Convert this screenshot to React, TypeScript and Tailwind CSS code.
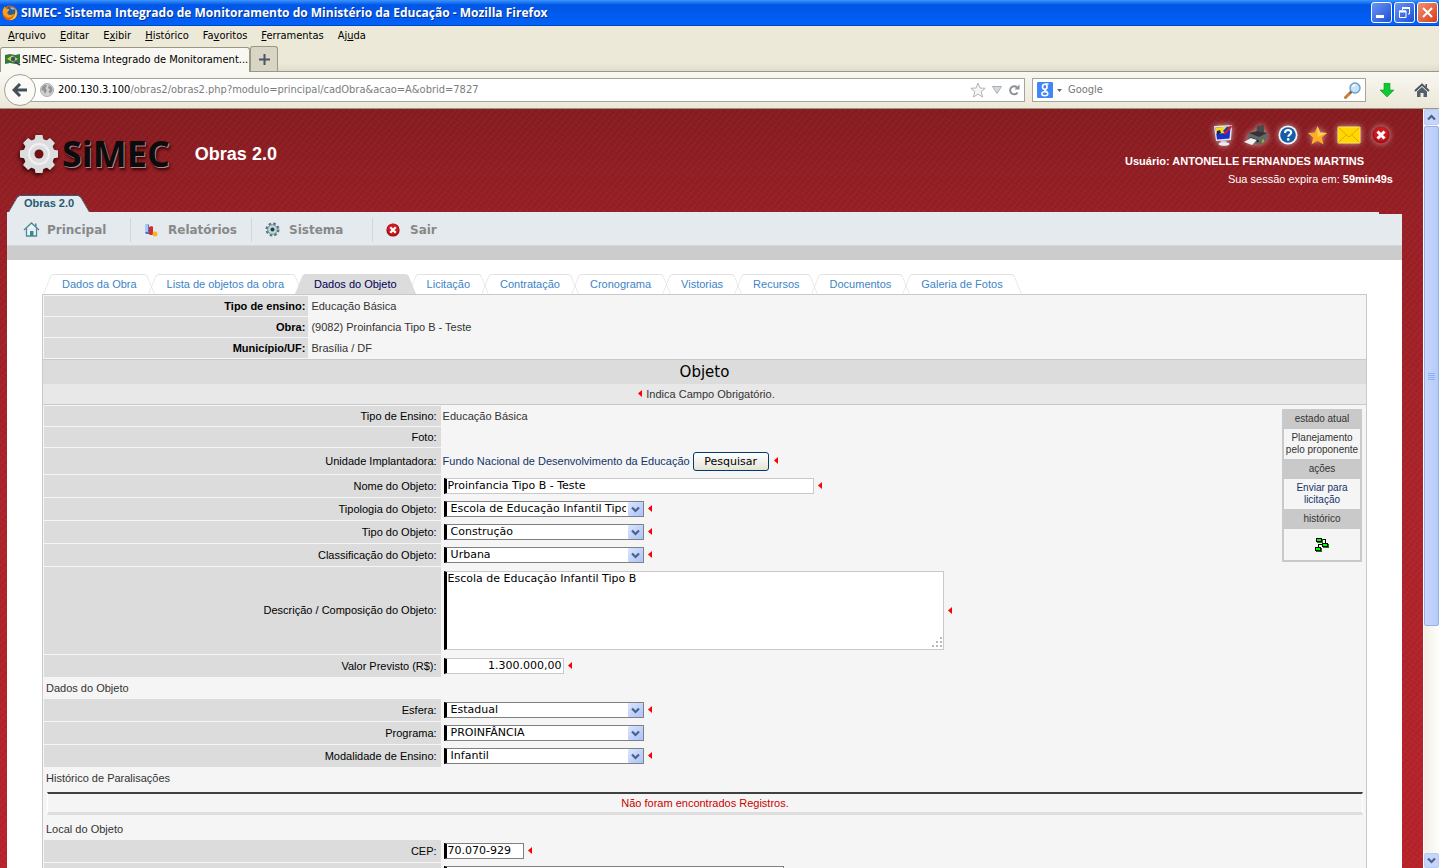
import type { ReactNode } from 'react';

const menuBar = [
  ['', 'A', 'rquivo'],
  ['', 'E', 'ditar'],
  ['E', 'x', 'ibir'],
  ['', 'H', 'istórico'],
  ['Fa', 'v', 'oritos'],
  ['', 'F', 'erramentas'],
  ['Aj', 'u', 'da'],
];

const objectTabs = [
  'Dados da Obra',
  'Lista de objetos da obra',
  'Dados do Objeto',
  'Licitação',
  'Contratação',
  'Cronograma',
  'Vistorias',
  'Recursos',
  'Documentos',
  'Galeria de Fotos',
];

const workInfo = [
  ['Tipo de ensino:', 'Educação Básica'],
  ['Obra:', '(9082) Proinfancia Tipo B - Teste'],
  ['Município/UF:', 'Brasília / DF'],
];

/* ---------- Icons ---------- */

function Gear({ size, fill, hole }: { size: number; fill: string; hole: string }) {
  return (
    <svg width={size} height={size} viewBox="0 0 40 40" aria-hidden="true">
      <g fill={fill}>
        {[0, 45, 90, 135].map((angle) => (
          <path key={angle} d="M16.500 1h7l1 5v28l-1 5h-7l-1-5V6z" transform={`rotate(${angle} 20 20)`} />
        ))}
        <circle cx="20" cy="20" r="15.500" />
      </g>
      <circle cx="20" cy="20" r="10" fill="none" stroke="#fff" strokeOpacity=".6" strokeWidth="2" />
      <circle cx="20" cy="20" r="4.500" fill={hole} />
    </svg>
  );
}

function FirefoxIcon() {
  return (
    <svg width="16" height="16" viewBox="0 0 16 16" aria-hidden="true">
      <circle cx="8" cy="8" r="7.500" fill="#e66000" />
      <circle cx="8.500" cy="6.500" r="5" fill="#2c5d9e" />
      <path d="M8 2.500c2-.8 4 0 5 1.500-1 .3-2 1-3 .5S8.500 3.500 8 2.500z" fill="#7fc1ec" />
      <path d="M.6 6C1 4 2 2.500 3 1.500c0 1 .5 1.800 1.500 2.200 1.500-.2 2.500.3 3 1L6 6.500c-.8.700-1 2 0 2.800 1.500 1.200 4 .8 6.500-.8-.8 3-4 4.800-7 4C2.500 11.500.6 9 .6 6z" fill="#f9a01b" />
      <path d="M13.500 3.500c2 2.500 2 7-.5 9.500-1.500 1.500-4 2.300-6 2 4-1 7-5 6.500-11.500z" fill="#ffcf3d" />
    </svg>
  );
}

function SiteIcon() {
  return (
    <svg width="16" height="14" viewBox="0 0 16 14" aria-hidden="true">
      <path d="M0 2l5-1 5 1 5-1v9l-5 1-5-1-5 1z" fill="#2f7a41" />
      <path d="M2 6l5-3.500L13 6 8 9z" fill="#e8cf3a" />
      <circle cx="8" cy="6" r="2.200" fill="#2d4f9b" />
      <path d="M10 9l5 3" stroke="#446" strokeWidth="2" />
    </svg>
  );
}

function GlobeIcon() {
  return (
    <svg width="14" height="14" viewBox="0 0 14 14" aria-hidden="true">
      <circle cx="7" cy="7" r="6.500" fill="#d2d2d2" stroke="#adadad" />
      <path d="M2 4l3-2.500 2 1L5.500 5 7 7.500 5 11 3.500 8 1.500 7zM9 2l3 2.500.5 3L10 11 8.500 8.500 10 6.500 8 5z" fill="#959595" />
    </svg>
  );
}

function ReloadIcon() {
  return (
    <svg width="12" height="12" viewBox="0 0 12 12" aria-hidden="true">
      <path d="M9 3.500A4 4 0 1 0 9.500 8.500" fill="none" stroke="#8a9199" strokeWidth="2" />
      <path d="M11.500.5v5h-5z" fill="#8a9199" />
    </svg>
  );
}

function MagnifierIcon() {
  return (
    <svg width="17" height="17" viewBox="0 0 17 17" aria-hidden="true">
      <path d="M7 10L1.500 15.500" stroke="#c77d35" strokeWidth="3" strokeLinecap="round" />
      <path d="M8 9l-2 2" stroke="#555" strokeWidth="2" />
      <circle cx="11" cy="6" r="5" fill="#c6e5fa" stroke="#6f9cc6" strokeWidth="1.400" />
      <path d="M8.500 5c.5-1.500 2-2 3-1.800" stroke="#fff" strokeWidth="1.500" fill="none" />
    </svg>
  );
}

function HomeIcon() {
  return (
    <svg width="16" height="15" viewBox="0 0 16 15" aria-hidden="true">
      <path d="M1 8l7-6.500L15 8" fill="none" stroke="#4b5563" strokeWidth="2" />
      <path d="M3 8.500l5-4.500 5 4.500V14H9.500v-4h-3v4H3z" fill="#55606d" />
      <path d="M11.500 1H13v4l-1.500-1.500z" fill="#4b5563" />
    </svg>
  );
}

function CloseBadge({ size }: { size: number }) {
  return (
    <svg width={size} height={size} viewBox="0 0 18 18" aria-hidden="true">
      <circle cx="9" cy="9" r="8.500" fill="#a80f14" />
      <circle cx="9" cy="8" r="7" fill="#cc1a1f" />
      <path d="M5.500 5.500l7 7M12.500 5.500l-7 7" stroke="#fff" strokeWidth="3" />
    </svg>
  );
}

function MonitorIcon() {
  return (
    <svg width="22" height="22" viewBox="0 0 22 22" aria-hidden="true">
      <path d="M2 2l18-1-1 15-15 1z" fill="#dfe6ee" />
      <path d="M3.500 3.500L18.500 2.500l-1 12-12.500 1z" fill="#1b2ec9" />
      <path d="M3.500 3.500L15 2.700 11 7l2 2-8.500 1z" fill="#f5dc19" />
      <path d="M5 7l3-1 1 3-4 2z" fill="#152072" />
      <path d="M19 1l-7 8 1 2 7-8z" fill="#d61e1e" />
      <path d="M9 17h5l1 3H8z" fill="#c8ced6" />
      <ellipse cx="12" cy="20" rx="5.500" ry="1.800" fill="#e8ebef" />
    </svg>
  );
}

function PrinterIcon() {
  return (
    <svg width="26" height="22" viewBox="0 0 26 22" aria-hidden="true">
      <path d="M14 2l7-1v9l-8 1z" fill="#4a4a4a" />
      <path d="M6 9l9-2 9 2 1 6-8 6-8-2-5-4z" fill="#666" />
      <path d="M6 9l9-2 9 2-8 4z" fill="#333" />
      <path d="M7 13l8 3 1 2-5-1z" fill="#151515" />
      <path d="M1 18l7-4 6 2-5 5z" fill="#f0f0f0" />
      <path d="M19 16l2-1v3l-2 1z" fill="#7dbb2e" />
    </svg>
  );
}

function HelpIcon() {
  return (
    <svg width="20" height="20" viewBox="0 0 20 20" aria-hidden="true">
      <circle cx="10" cy="10" r="9.500" fill="#f4f8fc" />
      <circle cx="10" cy="10" r="7.800" fill="#145ea8" />
      <path d="M7 8c0-4 6.200-3.800 6.200-.4 0 2.200-2.900 2-2.900 4.200" fill="none" stroke="#fff" strokeWidth="2.100" />
      <circle cx="10.200" cy="14.400" r="1.300" fill="#fff" />
    </svg>
  );
}

function StarIcon() {
  return (
    <svg width="21" height="21" viewBox="0 0 21 21" aria-hidden="true">
      <path d="M10.500 1l2.700 6.500 7 .5-5.400 4.500 1.800 7-6.100-3.800-6.100 3.800 1.800-7L.8 8l7-.5z" fill="#ffae22" />
      <path d="M10.500 1l2.700 6.500 7 .5-9.700 4z" fill="#ffd257" />
    </svg>
  );
}

function MailIcon() {
  return (
    <svg width="24" height="18" viewBox="0 0 24 18" aria-hidden="true">
      <path d="M1 1h22v16H1z" fill="#ffd800" stroke="#ffe45c" />
      <path d="M1.500 1.500L12 11 22.500 1.500M1.500 16.500L9 9M22.500 16.500L15 9" fill="none" stroke="#e6a400" />
    </svg>
  );
}

function HouseIcon() {
  return (
    <svg width="17" height="15" viewBox="0 0 17 15" aria-hidden="true">
      <path d="M1 8l7.500-7L16 8M3.500 6.500V14h10V6.500" fill="#eef5f7" stroke="#4c8a99" strokeWidth="1.300" />
      <path d="M7 9h3.500v5H7z" fill="#3e8494" />
      <path d="M12 1.500h1.500v4L12 4z" fill="#4c8a99" />
    </svg>
  );
}

function ChartIcon() {
  return (
    <svg width="14" height="14" viewBox="0 0 14 14" aria-hidden="true">
      <path d="M1 2l3-1 1 1v9H2L1 9z" fill="#3f74d8" />
      <path d="M1 2l3-1v8L1 9z" fill="#a9c6f5" />
      <path d="M5 4l3-1 1 1v8H6L5 11z" fill="#d42a2a" />
      <circle cx="11" cy="11" r="2.500" fill="#f4b81e" />
    </svg>
  );
}

function CogIcon() {
  return (
    <svg width="15" height="15" viewBox="0 0 15 15" aria-hidden="true">
      <circle cx="7.500" cy="7.500" r="5.800" fill="#dfe9ec" stroke="#54747e" strokeWidth="2.400" strokeDasharray="2.500 2.060" />
      <circle cx="7.500" cy="7.500" r="4.800" fill="#c3d5da" stroke="#6d8f98" />
      <circle cx="7.500" cy="7.500" r="2" fill="#243f4c" />
    </svg>
  );
}

function WorkflowIcon() {
  return (
    <svg width="15" height="14" viewBox="0 0 15 14" aria-hidden="true" shapeRendering="crispEdges">
      <path d="M7 1.500h3.500V6M7 6.500H3.500V10" fill="none" stroke="#000" />
      <path d="M2 1h6v4H2zM8 6h6v4H8zM1 10h6v4H1z" fill="#0a7a0a" />
      <path d="M1 0h6v4H1zM7 5h6v4H7zM0 9h6v4H0z" fill="#000" />
      <path d="M2 1h4v2H2zM8 6h4v2H8zM1 10h4v2H1z" fill="#0f0" />
    </svg>
  );
}

function Chevron({ up = false }: { up?: boolean }) {
  return (
    <svg width="9" height="7" viewBox="0 0 9 7" aria-hidden="true">
      <path d={up ? 'M1 5.500L4.500 2 8 5.500' : 'M1 1.500L4.500 5 8 1.500'} fill="none" stroke="#4d6185" strokeWidth="2.200" />
    </svg>
  );
}

function Required() {
  return (
    <svg className="mb-px ml-1 shrink-0" width="4" height="7" viewBox="0 0 4 7" aria-label="obrigatório">
      <path d="M4 0v7L0 3.500z" fill="#f00" />
    </svg>
  );
}

/* ---------- Browser window ---------- */

function TitleBar() {
  return (
    <header className="flex h-[26px] shrink-0 items-center border-b border-[#0146c4] bg-linear-to-b from-[#3b95ff] via-[#0055e5] via-20% to-[#0262f8] pr-px pl-[2px]">
      <FirefoxIcon />
      <h1 className="ml-[3px] flex-1 font-[Open_Sans,sans-serif] text-[12px] font-bold text-white [text-shadow:1px_1px_0_#0a2f8a]">
        SIMEC- Sistema Integrado de Monitoramento do Ministério da Educação - Mozilla Firefox
      </h1>
      <div className="flex gap-[2px]">
        <button aria-label="Minimizar" className="flex size-[21px] items-end rounded-[3px] border border-white bg-linear-to-br from-[#6a93f5] to-[#1b4fd6] p-1">
          <span className="h-[3px] w-2 bg-white" />
        </button>
        <button aria-label="Restaurar" className="flex size-[21px] items-center justify-center rounded-[3px] border border-white bg-linear-to-br from-[#6a93f5] to-[#1b4fd6]">
          <svg width="11" height="11" viewBox="0 0 11 11" aria-hidden="true">
            <path d="M3.500 3V1h7v6H9M.5 4h6.500v6.500H.5z" fill="none" stroke="#fff" />
            <path d="M3 1h8M0 4.500h7" stroke="#fff" strokeWidth="2" />
          </svg>
        </button>
        <button aria-label="Fechar" className="flex size-[21px] items-center justify-center rounded-[3px] border border-white bg-linear-to-br from-[#f0906f] to-[#d5380f]">
          <svg width="11" height="11" viewBox="0 0 11 11" aria-hidden="true">
            <path d="M1 1l9 9M10 1l-9 9" stroke="#fff" strokeWidth="2" />
          </svg>
        </button>
      </div>
    </header>
  );
}

function BrowserChrome() {
  return (
    <div className="shrink-0 font-[DejaVu_Sans_Condensed,Noto_Sans,sans-serif] text-[11px] text-black">
      <nav className="flex h-5 items-center gap-[14px] bg-[#ece9d8] pl-2">
        {menuBar.map(([before, key, after]) => (
          <button key={key + after}>
            {before}
            <u>{key}</u>
            {after}
          </button>
        ))}
      </nav>
      <div className="flex h-[26px] items-end border-b border-[#9a9784] bg-linear-to-b from-[#ece9d8] from-70% to-[#dedbca]">
        <div className="-mb-px flex h-[25px] w-[250px] items-center rounded-t-[3px] border border-b-0 border-[#9a9784] bg-[#f8f7f1] pl-1">
          <SiteIcon />
          <span className="ml-px whitespace-nowrap">SIMEC- Sistema Integrado de Monitorament...</span>
        </div>
        <button aria-label="Nova aba" className="flex h-[25px] w-7 items-center justify-center rounded-t-[3px] border border-b-0 border-[#9a9784] bg-[#d8d5c5]">
          <svg width="11" height="11" viewBox="0 0 11 11" aria-hidden="true">
            <path d="M5.500 0v11M0 5.500h11" stroke="#4a5563" strokeWidth="2" />
          </svg>
        </button>
      </div>
      <div className="flex h-[37px] items-center border-b border-[#9a9784] bg-linear-to-b from-[#f8f7f1] to-[#ebe8d8] pr-[9px] pl-1">
        <button aria-label="Voltar" className="z-10 flex size-8 shrink-0 items-center justify-center rounded-full border border-[#a3a193] bg-[#fbfaf6]">
          <svg width="16" height="14" viewBox="0 0 16 14" aria-hidden="true">
            <path d="M8 1L2 7l6 6M2.500 7H15" fill="none" stroke="#454f5b" strokeWidth="3" />
          </svg>
        </button>
        <div className="-ml-2 flex h-6 flex-1 items-center border border-[#a6a498] bg-white pr-1 pl-[11px]">
          <GlobeIcon />
          <p className="ml-1 flex-1 text-[#7c7c7c]">
            <span className="text-black">200.130.3.100</span>
            /obras2/obras2.php?modulo=principal/cadObra&amp;acao=A&amp;obrid=7827
          </p>
          <div className="flex items-center gap-[6px]">
            <svg width="16" height="16" viewBox="0 0 16 16" aria-hidden="true">
              <path d="M8 1l2 5 5.200.3-4 3.400 1.400 5.300L8 12.200 3.400 15l1.400-5.300-4-3.400L6 6z" fill="#f5f5f5" stroke="#b1b5ba" />
            </svg>
            <svg width="10" height="8" viewBox="0 0 10 8" aria-hidden="true">
              <path d="M.5.5h9L5 7.500z" fill="#d4dadd" stroke="#a9b0b6" />
            </svg>
            <ReloadIcon />
          </div>
        </div>
        <label className="ml-[7px] flex h-6 w-[334px] items-center border border-[#a6a498] bg-white px-1">
          <svg width="16" height="16" viewBox="0 0 16 16" aria-hidden="true">
            <rect width="16" height="16" rx="1" fill="#4285f4" />
            <ellipse cx="7.800" cy="4.800" rx="2.300" ry="2.600" fill="none" stroke="#fff" strokeWidth="1.600" />
            <path d="M8 2h3.500M8 7.500c-1 1 1.500 1.600 2.300 2.700" fill="none" stroke="#fff" strokeWidth="1.300" />
            <ellipse cx="7.800" cy="11.800" rx="3" ry="2" fill="none" stroke="#fff" strokeWidth="1.500" />
          </svg>
          <svg className="ml-1" width="5" height="3" viewBox="0 0 5 3" aria-hidden="true">
            <path d="M0 0h5L2.500 3z" fill="#666" />
          </svg>
          <input aria-label="Pesquisar na web" placeholder="Google" className="ml-[6px] min-w-0 flex-1 outline-none placeholder:text-[#777]" />
          <MagnifierIcon />
        </label>
        <div className="ml-[14px] flex items-center gap-[20px]">
          <svg width="14" height="14" viewBox="0 0 14 14" aria-hidden="true">
            <path d="M4 0h6v7h4l-7 7-7-7h4z" fill="#12c832" stroke="#0a9a24" strokeWidth=".6" />
          </svg>
          <HomeIcon />
        </div>
      </div>
    </div>
  );
}

function ScrollBar() {
  return (
    <div aria-hidden="true" className="flex w-4 shrink-0 flex-col border-l border-white bg-linear-to-r from-[#f1efe6] to-[#fefefb]">
      <div className="flex h-4 items-center justify-center rounded-[2px] border border-[#b7c9f5] bg-[#c6d5fb]">
        <Chevron up />
      </div>
      <div className="mt-px flex h-[500px] flex-col items-center justify-center gap-px rounded-[2px] border border-[#98b1e4] bg-linear-to-r from-[#c9d7fc] to-[#b4cbfa]">
        {[0, 1, 2, 3].map((line) => (
          <span key={line} className="h-px w-[7px] bg-[#8cb0f8]" />
        ))}
      </div>
      <div className="mt-auto flex h-[15px] items-center justify-center rounded-[2px] border border-[#b7c9f5] bg-[#c6d5fb]">
        <Chevron />
      </div>
    </div>
  );
}

/* ---------- SIMEC page ---------- */

function PageHeader() {
  return (
    <div className="flex h-[86px] items-start justify-between">
      <div className="flex items-center pt-[25px] pl-[19px]">
        <div className="drop-shadow-[-1px_2px_2px_#300]">
          <Gear size={40} fill="#dcdddf" hole="#6e1216" />
        </div>
        <span className="ml-[3px] font-[Open_Sans,sans-serif] text-[36px] leading-[38px] font-bold text-[#0c0c0c] [text-shadow:1px_1px_0_#b08a8e,2px_3px_3px_#3a0508]">SiMEC</span>
        <h2 className="ml-[25px] text-[18px] font-bold text-white">Obras 2.0</h2>
      </div>
      <div className="pt-[14px] pr-[30px] text-[11px] text-white">
        <div className="flex h-6 items-center justify-end gap-[9px] [&_svg]:drop-shadow-[0_0_3px_#fff9]">
          <button aria-label="Tela"><MonitorIcon /></button>
          <button aria-label="Imprimir"><PrinterIcon /></button>
          <button aria-label="Ajuda"><HelpIcon /></button>
          <button aria-label="Favoritos"><StarIcon /></button>
          <button aria-label="Mensagens"><MailIcon /></button>
          <button aria-label="Sair do sistema" className="pr-[3px] pl-[2px]"><CloseBadge size={18} /></button>
        </div>
        <p className="mt-1 pr-[29px] text-right leading-[20px] font-bold">Usuário: ANTONELLE FERNANDES MARTINS</p>
        <p className="text-right leading-4">
          Sua sessão expira em: <b>59min49s</b>
        </p>
      </div>
    </div>
  );
}

function ModuleMenuItem({ icon, children }: { icon: ReactNode; children: string }) {
  return (
    <li className="flex h-6 w-[121px] items-center border-r border-[#cdd9dd] pl-[13px] last:border-r-0">
      <span className="flex w-6">{icon}</span>
      <a href="#" className="font-[DejaVu_Sans,sans-serif] text-[12px] font-bold text-[#888]">{children}</a>
    </li>
  );
}

function ObjectTabs() {
  return (
    <ul className="flex pl-[5px] text-[11px] leading-[20px]">
      {objectTabs.map((tab) => {
        const selected = tab === 'Dados do Objeto';
        return (
          <li
            key={tab}
            className={
              selected
                ? 'relative px-[15px] before:absolute before:inset-y-0 before:left-0 before:w-3/5 before:-skew-x-[22deg] before:rounded-tl-[3px] before:bg-[#dcdcdc] after:absolute after:inset-y-0 after:right-0 after:w-3/5 after:skew-x-[22deg] after:rounded-tr-[3px] after:bg-[#dcdcdc]'
                : 'relative px-[15px] before:absolute before:inset-y-0 before:left-0 before:w-1/2 before:-skew-x-[22deg] before:rounded-tl-[3px] before:border-t before:border-l before:border-[#e2e2e2] after:absolute after:inset-y-0 after:right-0 after:w-1/2 after:skew-x-[22deg] after:rounded-tr-[3px] after:border-t after:border-r after:border-[#e2e2e2]'
            }
          >
            <a href="#" className={selected ? 'relative z-10 text-[#000055]' : 'relative z-10 text-[#3d84c6]'}>
              {tab}
            </a>
          </li>
        );
      })}
    </ul>
  );
}

function Field({ label, htmlFor, height, children }: { label: string; htmlFor?: string; height: string; children?: ReactNode }) {
  return (
    <>
      <label htmlFor={htmlFor} className={`${height} col-start-1 flex items-center justify-end bg-[#dcdcdc] pr-1 text-black`}>
        {label}
      </label>
      <div className="flex items-center pl-[2px]">{children}</div>
    </>
  );
}

function SelectBox({ id, value, required = true }: { id: string; value: string; required?: boolean }) {
  return (
    <>
      <span className="relative ml-px flex w-[200px]">
        <select id={id} className="h-4 w-full appearance-none border border-l-[3px] border-[#808080] border-l-black bg-white pr-[17px] pl-1 font-[DejaVu_Sans,sans-serif] text-[11px] leading-[14px] text-black">
          <option>{value}</option>
        </select>
        <span className="pointer-events-none absolute top-px right-px flex h-[14px] w-[15px] items-center justify-center rounded-[1px] bg-linear-to-br from-[#dbe5fe] to-[#a9c3fb]">
          <Chevron />
        </span>
      </span>
      {required && <Required />}
    </>
  );
}

function StatePanel() {
  return (
    <aside className="col-start-3 row-span-8 row-start-1 mt-[3px] mr-1 w-20 self-start border-2 border-t-0 border-[#c9c9c9] text-center text-[10px] leading-[12px]">
      <h4 className="bg-[#c9c9c9] leading-[20px]">estado atual</h4>
      <p className="py-[3px]">Planejamento pelo proponente</p>
      <h4 className="bg-[#c9c9c9] leading-[20px]">ações</h4>
      <a href="#" className="block px-2 py-[3px] text-[#133368]">Enviar para licitação</a>
      <h4 className="bg-[#c9c9c9] leading-[20px]">histórico</h4>
      <button aria-label="Ver histórico" className="flex h-[31px] w-full items-center justify-center">
        <WorkflowIcon />
      </button>
    </aside>
  );
}

function SectionTitle({ children }: { children: string }) {
  return <h4 className="pt-[2px] pb-px pl-[2px] leading-[18px]">{children}</h4>;
}

function ObjectForm() {
  const inputClass = 'ml-px h-4 border border-l-[3px] border-[#c9c9c9] border-l-black bg-white px-px font-[DejaVu_Sans,sans-serif] text-[11px] text-black';
  return (
    <form>
      <div className="grid grid-cols-[30%_1fr_auto] gap-y-px pt-px">
        <Field label="Tipo de Ensino:" height="h-5">Educação Básica</Field>
        <Field label="Foto:" height="h-5" />
        <Field label="Unidade Implantadora:" height="h-[26px]">
          <a href="#" className="text-[#133368]">Fundo Nacional de Desenvolvimento da Educação</a>
          <button type="button" className="mr-px ml-[3px] h-[19px] w-[76px] rounded-[3px] border border-[#003c74] bg-linear-to-b from-white to-[#e6e3d6] font-[DejaVu_Sans,sans-serif] text-[11px] leading-[17px] text-black">
            Pesquisar
          </button>
          <Required />
        </Field>
        <Field label="Nome do Objeto:" htmlFor="nome" height="h-[22px]">
          <input id="nome" defaultValue="Proinfancia Tipo B - Teste" className={`${inputClass} w-[370px]`} />
          <Required />
        </Field>
        <Field label="Tipologia do Objeto:" htmlFor="tipologia" height="h-[22px]">
          <SelectBox id="tipologia" value="Escola de Educação Infantil Tipo B" />
        </Field>
        <Field label="Tipo do Objeto:" htmlFor="tipo" height="h-[22px]">
          <SelectBox id="tipo" value="Construção" />
        </Field>
        <Field label="Classificação do Objeto:" htmlFor="classificacao" height="h-[22px]">
          <SelectBox id="classificacao" value="Urbana" />
        </Field>
        <Field label="Descrição / Composição do Objeto:" htmlFor="descricao" height="h-[87px]">
          <span className="relative ml-px flex w-[500px]">
            <textarea
              id="descricao"
              defaultValue="Escola de Educação Infantil Tipo B"
              className="h-[79px] w-full resize-none border border-l-[3px] border-[#c9c9c9] border-l-black bg-white px-px font-[DejaVu_Sans,sans-serif] text-[11px] leading-[14px] text-black"
            />
            <svg className="pointer-events-none absolute right-[2px] bottom-[2px]" width="11" height="11" viewBox="0 0 11 11" aria-hidden="true">
              <path d="M9 0h2v2H9zM9 4h2v2H9zM5 4h2v2H5zM9 8h2v2H9zM5 8h2v2H5zM1 8h2v2H1z" fill="#b8b8b8" />
            </svg>
          </span>
          <Required />
        </Field>
        <Field label="Valor Previsto (R$):" htmlFor="valor" height="h-[22px]">
          <input id="valor" defaultValue="1.300.000,00" className={`${inputClass} w-[120px] text-right`} />
          <Required />
        </Field>
        <StatePanel />
      </div>

      <SectionTitle>Dados do Objeto</SectionTitle>
      <div className="grid grid-cols-[30%_1fr] gap-y-px pt-px">
        <Field label="Esfera:" htmlFor="esfera" height="h-[22px]">
          <SelectBox id="esfera" value="Estadual" />
        </Field>
        <Field label="Programa:" htmlFor="programa" height="h-[22px]">
          <SelectBox id="programa" value="PROINFÂNCIA" required={false} />
        </Field>
        <Field label="Modalidade de Ensino:" htmlFor="modalidade" height="h-[22px]">
          <SelectBox id="modalidade" value="Infantil" />
        </Field>
      </div>

      <SectionTitle>Histórico de Paralisações</SectionTitle>
      <p className="mx-[3px] mt-1 mb-[3px] border-x border-t-2 border-b-[3px] border-x-white border-t-[#404040] border-b-[#dedede] text-center leading-[18px] text-[#c00]">
        Não foram encontrados Registros.
      </p>

      <SectionTitle>Local do Objeto</SectionTitle>
      <div className="grid grid-cols-[30%_1fr] gap-y-px pt-px">
        <Field label="CEP:" htmlFor="cep" height="h-[22px]">
          <input id="cep" defaultValue="70.070-929" className={`${inputClass} w-20 border-y-[#808080] border-r-[#808080]`} />
          <Required />
        </Field>
        <Field label="" height="h-[22px]">
          <input aria-label="Logradouro" className={`${inputClass} w-[340px] border-y-[#808080] border-r-[#808080]`} />
        </Field>
      </div>
    </form>
  );
}

export default function App() {
  return (
    <div className="flex h-screen flex-col overflow-hidden">
      <TitleBar />
      <BrowserChrome />
      <div className="flex min-h-0 flex-1">
        <main className="min-w-0 flex-1 overflow-hidden bg-[repeating-linear-gradient(35deg,#0000_0_2px,#4000000c_2px_4px),repeating-linear-gradient(-50deg,#0000_0_3px,#ff80800a_3px_5px),linear-gradient(#861c21,#982026_110px,#ac242b_50%,#b9232b)] font-[Liberation_Sans,sans-serif]">
          <PageHeader />
          <div className="mr-[21px] ml-[7px]">
            <div className="flex">
              <a
                href="#"
                className="relative ml-px px-4 text-[11px] leading-[17px] font-bold text-[#245a75] before:absolute before:inset-y-0 before:left-[5px] before:w-1/2 before:-skew-x-[30deg] before:rounded-tl-[3px] before:border-t before:border-l before:border-[#2f5c80] before:bg-[#e4eaed] after:absolute after:inset-y-0 after:right-[5px] after:w-1/2 after:skew-x-[30deg] after:rounded-tr-[3px] after:border-t after:border-r after:border-[#2f5c80] after:bg-[#e4eaed]"
              >
                <span className="relative z-10">Obras 2.0</span>
              </a>
            </div>
            <div className="mr-[23px] h-[2px] bg-[#e4eaed]" />
            <nav className="border-b border-[#d3dadd] bg-[#e4eaed]">
              <ul className="flex h-[31px] items-center pl-[3px]">
                <ModuleMenuItem icon={<HouseIcon />}>Principal</ModuleMenuItem>
                <ModuleMenuItem icon={<ChartIcon />}>Relatórios</ModuleMenuItem>
                <ModuleMenuItem icon={<CogIcon />}>Sistema</ModuleMenuItem>
                <ModuleMenuItem icon={<CloseBadge size={14} />}>Sair</ModuleMenuItem>
              </ul>
            </nav>
            <div className="h-[14px] bg-[#ccc]" />
            <div className="bg-white px-[35px] pt-[14px] text-[11px] text-[#333]">
              <ObjectTabs />
              <div className="border border-[#c9c9c9] bg-[#f5f5f5] pt-px pl-px">
                <dl className="grid grid-cols-[20%_1fr] gap-y-px pb-px leading-[20px]">
                  {workInfo.map(([label, value]) => (
                    <div key={label} className="col-span-2 grid grid-cols-subgrid">
                      <dt className="bg-[#dcdcdc] pr-[3px] text-right font-bold text-black">{label}</dt>
                      <dd className="pl-[3px]">{value}</dd>
                    </div>
                  ))}
                </dl>
                <h3 className="-ml-px border-t border-[#c9c9c9] bg-[#dcdcdc] text-center font-[DejaVu_Sans,sans-serif] text-[15px] leading-[24px] text-black">Objeto</h3>
                <p className="-ml-px flex h-[21px] items-center justify-center gap-1 border-b border-[#c9c9c9] bg-[#e8e8e8]">
                  <Required />
                  Indica Campo Obrigatório.
                </p>
                <ObjectForm />
              </div>
            </div>
          </div>
        </main>
        <ScrollBar />
      </div>
    </div>
  );
}
